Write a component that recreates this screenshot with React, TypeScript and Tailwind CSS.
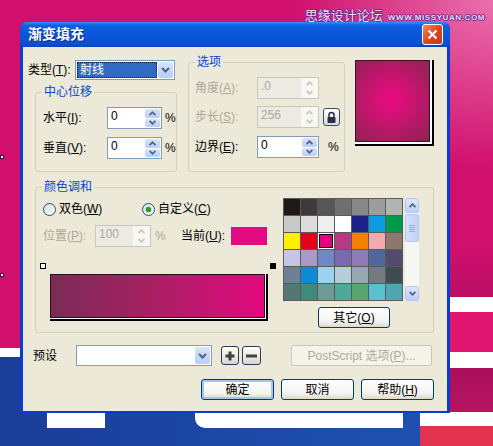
import React from "react";

// 渐变填充 dialog (CorelDRAW, XP theme)

const palette = [
  ["#1f1a17", "#3d3a39", "#575656", "#6f6f6e", "#878787", "#9d9d9d", "#b2b3b3"],
  ["#c8c9c9", "#dcdcdc", "#efefef", "#ffffff", "#1d2088", "#0c9de0", "#00994a"],
  ["#fff000", "#e5001a", "#e4007f", "#b23b86", "#f18100", "#f3a9b0", "#8e776b"],
  ["#c8c4e3", "#a79bca", "#7087c5", "#7a69b0", "#8f7cb6", "#4f659c", "#54496e"],
  ["#6e7f97", "#0e8ad6", "#9ad3f2", "#b6cdda", "#98a6b1", "#737b7f", "#3f4a51"],
  ["#547774", "#3d8c7a", "#6e9b96", "#4ea99b", "#57a66f", "#58c0ce", "#4ea6b1"],
];

const Chevron = ({ dir, color }: { dir: "up" | "down"; color: string }) => (
  <svg width="7" height="5" viewBox="0 0 7 5">
    <path
      d={dir === "up" ? "M0.6 4.2 L3.5 1.2 L6.4 4.2" : "M0.6 0.8 L3.5 3.8 L6.4 0.8"}
      fill="none"
      stroke={color}
      strokeWidth="1.7"
    />
  </svg>
);

const DropArrow = () => (
  <svg width="9" height="6" viewBox="0 0 9 6">
    <path d="M1 1 L4.5 4.5 L8 1" fill="none" stroke="#4d6185" strokeWidth="2" />
  </svg>
);

const U = ({ k }: { k: string }) => <span className="underline">{k}</span>;

function SpinBox({ value, disabled, w }: { value: string; disabled?: boolean; w: string }) {
  return (
    <div
      className={`flex h-[22px] ${w} border ${
        disabled ? "border-[#c9c7ba] bg-[#ebebe4]" : "border-[#7f9db9] bg-white"
      }`}
    >
      <div className={`flex-1 pl-[3px] text-[12px] leading-[17px] ${disabled ? "text-[#aca899]" : "text-black"}`}>
        {value}
      </div>
      <div className={`flex w-[17px] flex-col gap-px p-px ${disabled ? "bg-[#f7f7f3]" : ""}`}>
        <div
          className={`flex flex-1 items-center justify-center rounded-[2px] ${
            disabled ? "" : "bg-[linear-gradient(to_bottom,#d8e4fe,#b9cdf8)]"
          }`}
        >
          <Chevron dir="up" color={disabled ? "#c9c7ba" : "#4d6185"} />
        </div>
        <div
          className={`flex flex-1 items-center justify-center rounded-[2px] ${
            disabled ? "" : "bg-[linear-gradient(to_bottom,#d8e4fe,#b9cdf8)]"
          }`}
        >
          <Chevron dir="down" color={disabled ? "#c9c7ba" : "#4d6185"} />
        </div>
      </div>
    </div>
  );
}

function GroupBox({ title, className, children }: { title: string; className: string; children?: React.ReactNode }) {
  return (
    <div className={`relative rounded-[3px] border border-[#d0d0bf] ${className}`}>
      <span className="absolute -top-[9px] left-[6px] bg-[#ece9d8] px-[2px] text-[12px] leading-[16px] text-[#0046d5]">
        {title}
      </span>
      {children}
    </div>
  );
}

function Radio({ checked }: { checked?: boolean }) {
  return (
    <span className="flex h-[13px] w-[13px] items-center justify-center rounded-full border border-[#1c5180] bg-[linear-gradient(135deg,#dcdcd5,#ffffff)]">
      {checked && <span className="h-[5px] w-[5px] rounded-full bg-[#21a121] shadow-[0_0_1px_#0b6b0b]" />}
    </span>
  );
}

function XPButton({ children, w, def, disabled }: { children: React.ReactNode; w: string; def?: boolean; disabled?: boolean }) {
  return (
    <div
      className={`flex h-[21px] ${w} items-center justify-center rounded-[3px] border text-[12px] ${
        disabled
          ? "border-[#c9c7ba] bg-[#f5f4ea] text-[#aca899]"
          : "border-[#003c74] bg-[linear-gradient(to_bottom,#ffffff,#f3f3ef_70%,#dcd8cc)] text-black"
      } ${def ? "shadow-[inset_0_0_0_2px_#a9c3f0]" : ""}`}
    >
      {children}
    </div>
  );
}

function TitleBar() {
  return (
    <div className="flex h-[25px] items-center justify-between rounded-t-[7px] bg-[linear-gradient(to_bottom,#3d8ef7_0%,#0d60e0_14%,#0a56d8_50%,#0b50d2_88%,#0a40c0_100%)] pl-[8px] pr-[7px]">
      <span className="text-[14px] font-bold text-white [text-shadow:1px_1px_#0a2a8a]">渐变填充</span>
      <div className="flex h-[21px] w-[21px] items-center justify-center rounded-[3px] border border-white bg-[linear-gradient(135deg,#f08a6a,#d9441f_55%,#c53a18)]">
        <svg width="11" height="11" viewBox="0 0 11 11">
          <path d="M1.5 1.5 L9.5 9.5 M9.5 1.5 L1.5 9.5" stroke="white" strokeWidth="2.2" />
        </svg>
      </div>
    </div>
  );
}

function TypeCombo() {
  return (
    <div className="flex h-[20px] w-[100px] border border-[#7f9db9] bg-white p-px">
      <div className="flex flex-1 items-center border border-dotted border-[#1a1a1a] bg-[#316ac5] pl-[2px] text-[12px] text-white">
        射线
      </div>
      <div className="ml-px flex w-[15px] items-center justify-center rounded-[2px] bg-[linear-gradient(to_bottom,#d8e4fe,#b9cdf8)]">
        <DropArrow />
      </div>
    </div>
  );
}

function Lock() {
  return (
    <div className="ml-[4px] flex h-[18px] w-[17px] items-center justify-center rounded-[3px] border border-[#3a4a6a] bg-[linear-gradient(to_bottom,#ffffff,#dcdcd4)]">
      <svg width="11" height="13" viewBox="0 0 11 13">
        <path d="M3 6 V4 a2.5 2.5 0 0 1 5 0 V6" fill="none" stroke="#2b2f4d" strokeWidth="1.5" />
        <rect x="1.5" y="6" width="8" height="6" rx="1" fill="#2b2f4d" />
      </svg>
    </div>
  );
}

function Palette() {
  return (
    <div className="flex">
      <div className="grid grid-cols-7 gap-px bg-[#5a5a5a] p-px">
        {palette.flat().map((c, i) => (
          <div
            key={i}
            className={`h-[16px] w-[16px] ${i === 16 ? "shadow-[inset_0_0_0_1px_#ffffff,inset_0_0_0_2px_#000000]" : ""}`}
            style={{ backgroundColor: c }}
          />
        ))}
      </div>
      <div className="ml-[2px] flex h-[103px] w-[14px] flex-col bg-[#f7f7f3]">
        <div className="flex h-[15px] items-center justify-center rounded-[2px] border border-[#b5c8f2] bg-[linear-gradient(to_bottom,#dce7fe,#bccff8)]">
          <Chevron dir="up" color="#4d6185" />
        </div>
        <div className="mt-[1px] flex h-[28px] flex-col items-center justify-center gap-px rounded-[2px] border border-[#b5c8f2] bg-[linear-gradient(to_right,#d3e0fd,#c2d3f9)]">
          <span className="h-px w-[6px] bg-[#8faaf0]" />
          <span className="h-px w-[6px] bg-[#8faaf0]" />
          <span className="h-px w-[6px] bg-[#8faaf0]" />
          <span className="h-px w-[6px] bg-[#8faaf0]" />
        </div>
        <div className="flex-1" />
        <div className="flex h-[15px] items-center justify-center rounded-[2px] border border-[#b5c8f2] bg-[linear-gradient(to_bottom,#dce7fe,#bccff8)]">
          <Chevron dir="down" color="#4d6185" />
        </div>
      </div>
    </div>
  );
}

function Background() {
  return (
    <div className="absolute inset-0">
      <div className="absolute right-0 top-0 h-[170px] w-[200px] bg-[radial-gradient(ellipse_at_100%_0%,rgba(255,190,225,0.55),rgba(255,190,225,0)_70%)]" />
      <div className="absolute left-0 top-[155px] h-[4px] w-[4px] border border-[#3a1030] bg-white" />
      <div className="absolute left-0 top-[273px] h-[4px] w-[4px] border border-[#3a1030] bg-white" />
      <div className="absolute left-0 top-[348px] h-[9px] w-[24px] bg-white" />
      <div className="absolute left-0 top-[357px] h-[89px] w-[455px] bg-[linear-gradient(to_right,#1a3d98,#1f52b3)]" />
      <div className="absolute left-[47px] top-[413px] h-[15px] w-[58px] bg-white" />
      <div className="absolute left-[195px] top-[413px] h-[15px] w-[208px] rounded-bl-[10px] bg-white" />
      <div className="absolute left-[450px] top-[250px] h-[47px] w-[43px] bg-[linear-gradient(to_bottom,#cf0f6e,#b80f63)]" />
      <div className="absolute left-[450px] top-[297px] h-[15px] w-[43px] bg-white" />
      <div className="absolute left-[450px] top-[312px] h-[40px] w-[43px] bg-[#e0156f]" />
      <div className="absolute left-[450px] top-[352px] h-[16px] w-[43px] bg-white" />
      <div className="absolute left-[450px] top-[368px] h-[44px] w-[43px] bg-[linear-gradient(to_bottom,#a80f5d,#b8135f)]" />
      <div className="absolute left-[420px] top-[412px] h-[14px] w-[73px] bg-white" />
      <div className="absolute left-[420px] top-[426px] h-[20px] w-[73px] bg-[#e23451]" />
      <div className="absolute right-[8px] top-[8px] flex items-end gap-[5px] text-[#ecdcf8] [text-shadow:1px_0_#6a2a8c,-1px_0_#6a2a8c,0_1px_#6a2a8c,0_-1px_#6a2a8c]">
        <span className="text-[13px] leading-[16px]">思缘设计论坛</span>
        <span className="text-[8px] font-bold leading-[12px] tracking-[0.6px]">WWW.MISSYUAN.COM</span>
      </div>
    </div>
  );
}

export default function App() {
  return (
    <div className="relative h-[446px] w-[493px] overflow-hidden bg-[#d1106d] font-['Liberation_Sans','Noto_Sans_CJK_SC',sans-serif] text-[12px]">
      <Background />

      <div className="absolute left-[20px] top-[22px] w-[430px] rounded-t-[7px] bg-[#0b3ccf]">
        <TitleBar />
        <div className="mx-[3px] mb-[2px] flex h-[364px] flex-col bg-[#ece9d8] text-black">
          {/* top section */}
          <div className="flex items-start pl-[5px] pt-[13px]">
            <div className="w-[149px]">
              <div className="flex h-[20px] items-center">
                <span className="w-[47px]">
                  类型(<U k="T" />):
                </span>
                <TypeCombo />
              </div>
              <GroupBox title="中心位移" className="ml-[7px] mt-[12px] h-[80px] w-[142px]">
                <div className="pl-[7px] pt-[14px]">
                  <div className="flex h-[22px] items-center">
                    <span className="w-[64px]">
                      水平(<U k="I" />):
                    </span>
                    <SpinBox value="0" w="w-[55px]" />
                    <span className="ml-[3px]">%</span>
                  </div>
                  <div className="mt-[8px] flex h-[22px] items-center">
                    <span className="w-[64px]">
                      垂直(<U k="V" />):
                    </span>
                    <SpinBox value="0" w="w-[55px]" />
                    <span className="ml-[3px]">%</span>
                  </div>
                </div>
              </GroupBox>
            </div>

            <GroupBox title="选项" className="ml-[11px] mt-[2px] h-[110px] w-[157px]">
              <div className="pl-[6px] pt-[14px]">
                <div className="flex h-[22px] items-center text-[#aca899]">
                  <span className="w-[62px]">
                    角度(<U k="A" />):
                  </span>
                  <SpinBox value=".0" disabled w="w-[62px]" />
                </div>
                <div className="mt-[7px] flex h-[22px] items-center text-[#aca899]">
                  <span className="w-[62px]">
                    步长(<U k="S" />):
                  </span>
                  <SpinBox value="256" disabled w="w-[62px]" />
                  <Lock />
                </div>
                <div className="mt-[8px] flex h-[22px] items-center">
                  <span className="w-[62px]">
                    边界(<U k="E" />):
                  </span>
                  <SpinBox value="0" w="w-[62px]" />
                  <span className="ml-[9px]">%</span>
                </div>
              </div>
            </GroupBox>

            <div className="ml-[10px] h-[86px] w-[79px] border-b-2 border-r-2 border-black bg-white pb-[2px] pr-[2px]">
              <div className="h-full w-full border border-[#3a1226] bg-[radial-gradient(circle_at_48%_48%,#ea0a80_0%,#c8146f_40%,#8c2353_100%)]" />
            </div>
          </div>

          {/* colour blend */}
          <GroupBox title="颜色调和" className="ml-[12px] mt-[15px] flex h-[146px] w-[399px]">
            <div className="w-[247px] pt-[13px]">
              <div className="flex h-[16px] items-center pl-[7px]">
                <div className="flex w-[99px] items-center">
                  <Radio />
                  <span className="ml-[3px]">
                    双色(<U k="W" />)
                  </span>
                </div>
                <Radio checked />
                <span className="ml-[3px]">
                  自定义(<U k="C" />)
                </span>
              </div>
              <div className="mt-[8px] flex h-[22px] items-center pl-[7px]">
                <span className="w-[52px] text-[#aca899]">
                  位置(<U k="P" />):
                </span>
                <SpinBox value="100" disabled w="w-[56px]" />
                <span className="ml-[4px] w-[26px] text-[#aca899]">%</span>
                <span className="w-[50px]">
                  当前(<U k="U" />):
                </span>
                <div className="h-[18px] w-[36px] bg-[#e20a80]" />
              </div>
              <div className="ml-[4px] mt-[16px] flex h-[6px] w-[236px] justify-between">
                <div className="h-[6px] w-[6px] border border-black bg-white" />
                <div className="h-[6px] w-[6px] bg-black" />
              </div>
              <div className="ml-[14px] mt-[5px] h-[47px] w-[218px] border-b-2 border-r-2 border-black bg-white pb-[1px] pr-[1px]">
                <div className="h-full w-full border border-[#2a0e1c] bg-[linear-gradient(to_right,#7a2b56,#a62162_45%,#e1097e)]" />
              </div>
            </div>
            <div className="pt-[10px]">
              <Palette />
              <div className="ml-[35px] mt-[6px]">
                <XPButton w="w-[72px]">
                  其它(<U k="O" />)
                </XPButton>
              </div>
            </div>
          </GroupBox>

          {/* presets */}
          <div className="mt-[12px] flex h-[21px] items-center pl-[10px]">
            <span className="w-[43px]">预设</span>
            <div className="flex h-[21px] w-[136px] border border-[#7f9db9] bg-white p-px">
              <div className="flex-1" />
              <div className="flex w-[15px] items-center justify-center rounded-[2px] bg-[linear-gradient(to_bottom,#d8e4fe,#b9cdf8)]">
                <DropArrow />
              </div>
            </div>
            <div className="ml-[9px] flex h-[19px] w-[18px] items-center justify-center rounded-[3px] border border-[#2b3a55] bg-[linear-gradient(to_bottom,#ffffff,#d8d6cc)]">
              <svg width="10" height="10" viewBox="0 0 10 10">
                <path d="M3.5 0.5 H6.5 V3.5 H9.5 V6.5 H6.5 V9.5 H3.5 V6.5 H0.5 V3.5 H3.5 Z" fill="#404040" />
              </svg>
            </div>
            <div className="ml-[3px] flex h-[19px] w-[19px] items-center justify-center rounded-[3px] border border-[#2b3a55] bg-[linear-gradient(to_bottom,#ffffff,#d8d6cc)]">
              <svg width="11" height="4" viewBox="0 0 11 4">
                <rect x="0" y="0.5" width="11" height="3" fill="#404040" />
              </svg>
            </div>
            <div className="ml-[30px]">
              <XPButton w="w-[141px]" disabled>
                PostScript 选项(<U k="P" />)...
              </XPButton>
            </div>
          </div>

          {/* buttons */}
          <div className="mt-[13px] flex justify-end gap-[7px] pr-[13px]">
            <XPButton w="w-[73px]" def>
              确定
            </XPButton>
            <XPButton w="w-[73px]">取消</XPButton>
            <XPButton w="w-[73px]">
              帮助(<U k="H" />)
            </XPButton>
          </div>
        </div>
      </div>
    </div>
  );
}
